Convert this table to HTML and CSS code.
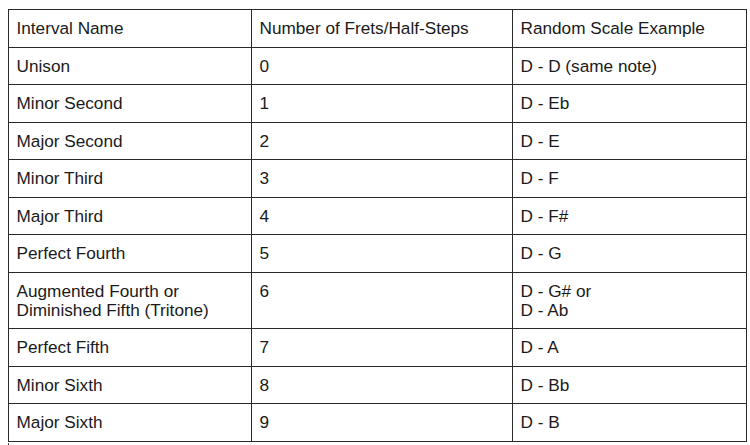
FILE: index.html
```html
<!DOCTYPE html>
<html>
<head>
<meta charset="utf-8">
<link rel="stylesheet" href="styles.css">
</head>
<body>
<table class="intervals">
  <colgroup>
    <col class="c1"><col class="c2"><col class="c3">
  </colgroup>
  <tr><td>Interval Name</td><td>Number of Frets/Half-Steps</td><td>Random Scale Example</td></tr>
  <tr><td>Unison</td><td>0</td><td>D - D (same note)</td></tr>
  <tr><td>Minor Second</td><td>1</td><td>D - Eb</td></tr>
  <tr><td>Major Second</td><td>2</td><td>D - E</td></tr>
  <tr><td>Minor Third</td><td>3</td><td>D - F</td></tr>
  <tr><td>Major Third</td><td>4</td><td>D - F#</td></tr>
  <tr><td>Perfect Fourth</td><td>5</td><td>D - G</td></tr>
  <tr><td>Augmented Fourth or<br>Diminished Fifth (Tritone)</td><td>6</td><td>D - G# or<br>D - Ab</td></tr>
  <tr><td>Perfect Fifth</td><td>7</td><td>D - A</td></tr>
  <tr><td>Minor Sixth</td><td>8</td><td>D - Bb</td></tr>
  <tr><td>Major Sixth</td><td>9</td><td>D - B</td></tr>
</table>
<div class="next"></div>
</body>
</html>
```
FILE: styles.css
```css
html, body {
  margin: 0;
  padding: 0;
  background: #ffffff;
}
body {
  padding: 9px 0 0 8px;
  font-family: "Liberation Sans", Arial, sans-serif;
  font-size: 17.2px;
  color: #1a1a1a;
}
.intervals {
  border-collapse: collapse;
  table-layout: fixed;
  width: 738px;
}
.c1 { width: 243px; }
.c2 { width: 261px; }
.c3 { width: 234px; }
.intervals td {
  border: 1px solid #2a2a2a;
  padding: 9px 7px 8.5px 7.5px;
  line-height: 19px;
  vertical-align: top;
  text-align: left;
}
.next {
  width: 0;
  height: 6px;
  border-left: 1px solid #555;
  margin-top: 1px;
}
```
